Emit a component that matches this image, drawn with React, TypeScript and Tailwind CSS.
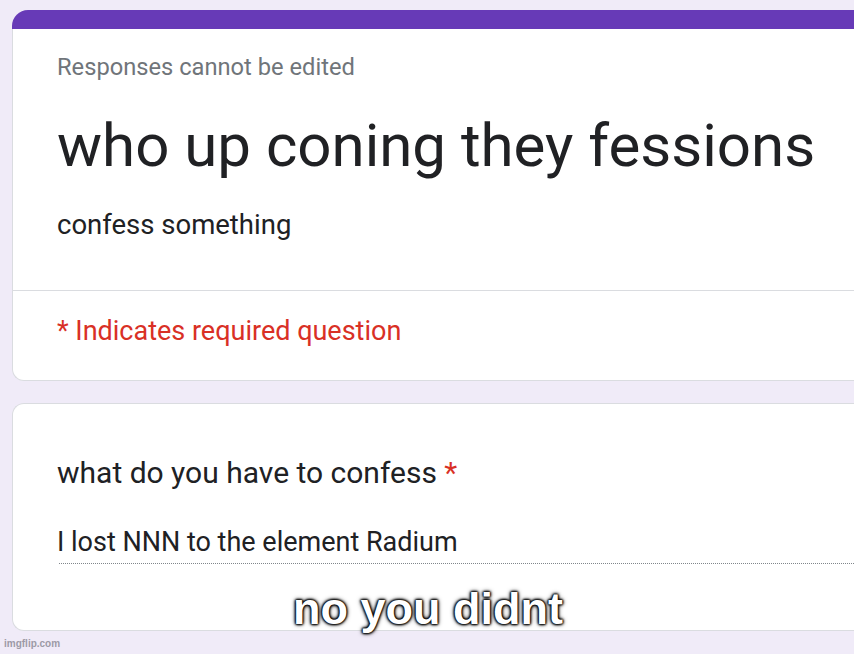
export default function App() {
  return (
    <div className="relative h-[654px] w-[854px] overflow-hidden bg-[#f0ebf8] font-['Roboto',sans-serif]">
      <div className="flex flex-col pl-[12px] pt-[10px]">
        {/* header card */}
        <div className="-mr-8 flex flex-col">
          <div className="h-[19px] rounded-tl-[16px] bg-[#673ab7]" />
          <div className="flex flex-col rounded-bl-[12px] border-b border-l border-[#dadce0] bg-white">
            <div className="flex flex-col pl-[44px]">
              <p className="mt-[23px] text-[23.7px] leading-[30px] text-[#70757a]">Responses cannot be edited</p>
              <h1 className="mt-[28px] text-[60px] leading-[72px] text-[#202124]">who up coning they fessions</h1>
              <p className="mt-[26px] text-[27.5px] leading-[34px] text-[#202124]">confess something</p>
            </div>
            <div className="mt-[48px] border-t border-[#dadce0]" />
            <p className="mt-[23px] pb-[32px] pl-[44px] text-[27px] leading-[34px] text-[#d93025]">
              * Indicates required question
            </p>
          </div>
        </div>

        {/* question card */}
        <div className="-mr-8 mt-[22px] flex h-[228px] flex-col rounded-l-[12px] border-y border-l border-[#dadce0] bg-white pl-[44px]">
          <p className="mt-[50px] text-[30px] leading-[38px] text-[#202124]">
            what do you have to confess <span className="text-[#d93025]">*</span>
          </p>
          <p className="mt-[33px] pb-[4px] text-[27px] leading-[34px] text-[#202124]">I lost NNN to the element Radium</p>
          <div className="ml-[2px] border-b border-dotted border-[#80868b]" />
        </div>
      </div>

      {/* meme caption */}
      <div className="absolute left-0 right-0 top-[584px] pl-[2px] text-center font-['Liberation_Sans',Arial,sans-serif] text-[45px] font-bold leading-[50px] text-white [text-shadow:0_0_2px_#000,0_0_2px_#000,0_0_3px_#000,0_0_3px_#000,0_0_5px_#000]">
        no you didnt
      </div>

      <div className="absolute left-[4px] top-[637px] font-['Liberation_Sans',Arial,sans-serif] text-[10px] font-semibold leading-[14px] text-[#9d9aa6]">
        imgflip.com
      </div>
    </div>
  );
}
